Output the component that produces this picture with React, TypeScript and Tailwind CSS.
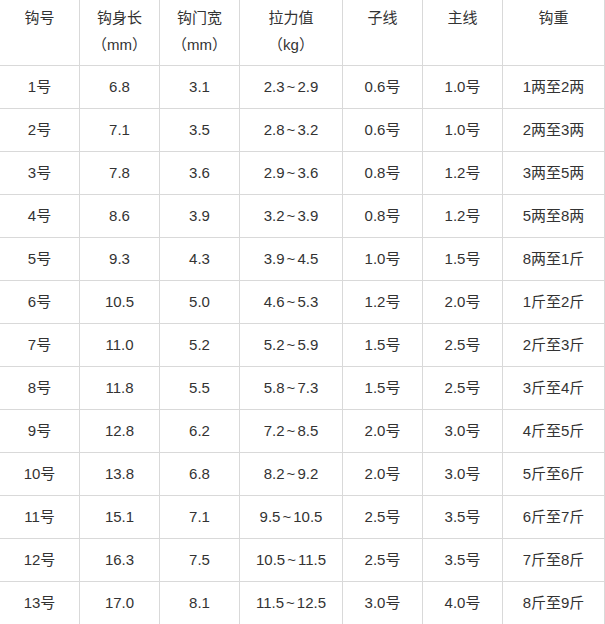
import React from "react";

// Hook size chart: 钩号 / 钩身长 / 钩门宽 / 拉力值 / 子线 / 主线 / 钩重
const headers: { title: string; unit?: string }[] = [
  { title: "钩号" },
  { title: "钩身长", unit: "（mm）" },
  { title: "钩门宽", unit: "（mm）" },
  { title: "拉力值", unit: "（kg）" },
  { title: "子线" },
  { title: "主线" },
  { title: "钩重" },
];

const rows: string[][] = [
  ["1号", "6.8", "3.1", "2.3~2.9", "0.6号", "1.0号", "1两至2两"],
  ["2号", "7.1", "3.5", "2.8~3.2", "0.6号", "1.0号", "2两至3两"],
  ["3号", "7.8", "3.6", "2.9~3.6", "0.8号", "1.2号", "3两至5两"],
  ["4号", "8.6", "3.9", "3.2~3.9", "0.8号", "1.2号", "5两至8两"],
  ["5号", "9.3", "4.3", "3.9~4.5", "1.0号", "1.5号", "8两至1斤"],
  ["6号", "10.5", "5.0", "4.6~5.3", "1.2号", "2.0号", "1斤至2斤"],
  ["7号", "11.0", "5.2", "5.2~5.9", "1.5号", "2.5号", "2斤至3斤"],
  ["8号", "11.8", "5.5", "5.8~7.3", "1.5号", "2.5号", "3斤至4斤"],
  ["9号", "12.8", "6.2", "7.2~8.5", "2.0号", "3.0号", "4斤至5斤"],
  ["10号", "13.8", "6.8", "8.2~9.2", "2.0号", "3.0号", "5斤至6斤"],
  ["11号", "15.1", "7.1", "9.5~10.5", "2.5号", "3.5号", "6斤至7斤"],
  ["12号", "16.3", "7.5", "10.5~11.5", "2.5号", "3.5号", "7斤至8斤"],
  ["13号", "17.0", "8.1", "11.5~12.5", "3.0号", "4.0号", "8斤至9斤"],
];

const colWidths = ["w-[80px]", "w-[80px]", "w-[80px]", "w-[103px]", "w-[80px]", "w-[80px]", "w-[102px]"];

// ranges like "2.3~2.9" get a little air around the tilde
function Cell({ text }: { text: string }) {
  if (!text.includes("~")) return <>{text}</>;
  const [a, b] = text.split("~");
  return (
    <>
      {a}
      <span className="px-[2px]">~</span>
      {b}
    </>
  );
}

export default function App() {
  return (
    <div className="w-[605px] bg-white font-['Liberation_Sans','Noto_Sans_CJK_SC',sans-serif] text-[15px] text-[#333]">
      <table className="w-[605px] table-fixed border-separate border-spacing-0">
        <colgroup>
          {colWidths.map((w, i) => (
            <col key={i} className={w} />
          ))}
        </colgroup>
        <thead>
          <tr>
            {headers.map((h) => (
              <th
                key={h.title}
                className="h-[66px] border-r border-b border-[#d9d9d9] px-1 pt-[4px] pb-[7px] align-top text-center font-normal leading-[27px]"
              >
                <div>{h.title}</div>
                {h.unit && <div>{h.unit}</div>}
              </th>
            ))}
          </tr>
        </thead>
        <tbody>
          {rows.map((row) => (
            <tr key={row[0]}>
              {row.map((cell, i) => (
                <td
                  key={i}
                  className="h-[43px] border-r border-b border-[#d9d9d9] px-1 text-center align-middle leading-[24px]"
                >
                  <Cell text={cell} />
                </td>
              ))}
            </tr>
          ))}
        </tbody>
      </table>
    </div>
  );
}
